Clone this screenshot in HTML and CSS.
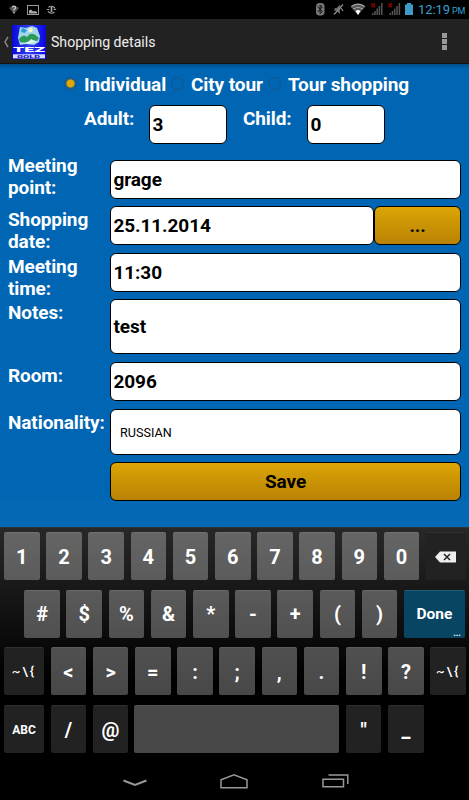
FILE: index.html
```html
<!DOCTYPE html>
<html lang="en">

<head>
    <meta charset="UTF-8">
    <meta name="viewport" content="width=device-width, initial-scale=1.0">
    <title>Shopping details</title>
    <link rel="stylesheet" href="styles.css">
</head>

<body>
    <div class="status-bar">
        <svg class="status-left" width="70" height="19" viewBox="0 0 70 19">
            <path d="M9 8q5-4 10 0l-5 6z" fill="#555" />
            <path d="M12.200 7.200q2-2 3.300 0q.4 1.300-1.500 2.300v1M14 12v1.300" fill="none" stroke="#ccc" stroke-width="1.300" />
            <rect x="27.500" y="5.500" width="11" height="9" fill="none" stroke="#999" />
            <path d="M29 13.500v-3l2-1 2 2 2-.5 2 1v1.500z" fill="#aaa" />
            <path d="M48.500 7.500a4 4 0 0 1 6.500 1M54.500 12a4 4 0 0 1-6.500-1M46.800 9.500h2.500M53.700 9.500h2.500" fill="none" stroke="#999" stroke-width="1.200" />
            <path d="M51.500 7v5" stroke="#aaa" stroke-width="1.600" />
        </svg>
        <svg class="status-right" width="104" height="19" viewBox="312 0 104 19">
            <rect x="316" y="3" width="8.500" height="12.500" rx="3.500" fill="#777" />
            <path d="M317.800 6.500l4.500 5-2.200 2v-8.500l2.200 2-4.500 5" fill="none" stroke="#111" />
            <path d="M334.500 8h2l3.500-3.500v9.500l-3.500-3h-2z" fill="#666" />
            <path d="M334 14.500l9-10M341 8l2 3" stroke="#888" stroke-width="1.300" />
            <path d="M350.500 6.500q7.500-6.500 15 0l-7.500 8.500z" fill="#555" />
            <path d="M351.500 6.500q6.500-4.500 13 0M353.500 9q4.500-3 9 0" fill="none" stroke="#aaa" stroke-width="1.200" />
            <path d="M355.500 11q2.500-2 5 0l-2.500 4z" fill="#fff" />
            <path d="M372.800 15v-2M375 15v-4M377.200 15v-6.500M379.400 15v-9M381.800 15v-12M390.300 15v-2M392.500 15v-4M394.700 15v-6.500M397 15v-9M399.400 15v-12" stroke="#555" stroke-width="1.500" />
            <path d="M371.500 3.500l3.500 3.500m0-3.500l-3.500 3.500M388.500 3.500l3.500 3.500m0-3.500l-3.500 3.500" stroke="#b00000" stroke-width="1.100" />
            <path d="M405 4.500h2v-1.500h4v1.500h2v10.500h-8z" fill="#3d9bc8" />
        </svg>
        <span class="clock">12:19<small>PM</small></span>
    </div>

    <div class="action-bar">
        <svg class="back" width="6" height="12" viewBox="0 0 6 12">
            <path d="M5 .8L2 6l3 5.200" fill="none" stroke="#888" stroke-width="1.500" />
        </svg>
        <svg class="logo" width="34" height="34" viewBox="0 0 34 34">
            <defs>
                <linearGradient id="logo-bg" x1="0" y1="0" x2="1" y2="0">
                    <stop offset="0" stop-color="#0a08d8" />
                    <stop offset=".5" stop-color="#3040f0" />
                    <stop offset="1" stop-color="#0805e0" />
                </linearGradient>
            </defs>
            <rect width="34" height="34" fill="url(#logo-bg)" />
            <path d="M8 2l6 1 6-2 5 2 3 8-1 6-5 3-8-1-6 1-2-7z" fill="#a3d7e8" />
            <path d="M10 3l5 2-2 3-4-1z" fill="#249bda" />
            <circle cx="18.500" cy="5" r="2.200" fill="#f4f6d0" />
            <path d="M7 14q4-6 8-2 4-7 12 1l-2 3-6-1-5 3-6-1z" fill="#2d9a5c" />
            <path d="M9 18q8 0 10-4l6 3-8 2z" fill="#d8f4ee" />
            <text class="logo-name" x="1" y="27.300" textLength="32" lengthAdjust="spacingAndGlyphs">TEZ</text>
            <rect x="1" y="29.300" width="32" height="4" fill="#dcdcff" />
            <text class="logo-sub" x="5" y="33" textLength="23" lengthAdjust="spacingAndGlyphs">GOLD</text>
        </svg>
        <h1>Shopping details</h1>
        <div class="menu-dots"><i></i><i></i><i></i></div>
    </div>

    <form class="details">
        <div class="types">
            <span class="radio checked"></span><label class="type-individual">Individual</label>
            <span class="radio"></span><label class="type-city">City tour</label>
            <span class="radio"></span><label>Tour shopping</label>
        </div>
        <div class="people">
            <label class="adult">Adult:</label>
            <div class="field small">3</div>
            <label class="child">Child:</label>
            <div class="field small">0</div>
        </div>

        <div class="row meeting-point">
            <label>Meeting point:</label>
            <div class="field">grage</div>
        </div>
        <div class="row">
            <label>Shopping date:</label>
            <div class="field date">25.11.2014</div>
            <div class="btn pick">...</div>
        </div>
        <div class="row">
            <label>Meeting time:</label>
            <div class="field">11:30</div>
        </div>
        <div class="row notes">
            <label>Notes:</label>
            <div class="field">test</div>
        </div>
        <div class="row">
            <label>Room:</label>
            <div class="field">2096</div>
        </div>
        <div class="row nationality">
            <label>Nationality:</label>
            <div class="field select">RUSSIAN</div>
        </div>
        <div class="row">
            <label></label>
            <div class="btn">Save</div>
        </div>
    </form>

    <div class="keyboard">
        <div class="keys">
            <b>1</b><b>2</b><b>3</b><b>4</b><b>5</b><b>6</b><b>7</b><b>8</b><b>9</b><b>0</b>
            <b class="dark wide">
                <svg width="21" height="12" viewBox="0 0 21 12">
                    <path d="M0 6l5-5.500h16v11h-16z" fill="#eee" />
                    <path d="M9 3l6 6m0-6l-6 6" stroke="#222" stroke-width="1.500" />
                </svg>
            </b>
        </div>
        <div class="keys second">
            <b>#</b><b>$</b><b>%</b><b>&amp;</b><b>*</b><b>-</b><b>+</b><b>(</b><b>)</b>
            <b class="done">Done<span>...</span></b>
        </div>
        <div class="keys third">
            <b class="dark alt">~\{</b><b>&lt;</b><b>&gt;</b><b>=</b><b>:</b><b>;</b><b>,</b><b>.</b><b>!</b><b>?</b><b class="dark alt last">~\{</b>
        </div>
        <div class="keys fourth">
            <b class="dark abc">ABC</b><b class="dark">/</b><b class="dark">@</b><b class="space"></b><b class="dark">"</b><b class="dark">_</b>
        </div>
    </div>

    <div class="nav-bar">
        <svg width="24" height="8" viewBox="0 0 24 8">
            <path d="M.5 1.500l11.500 4.500 11.500-4.500" fill="none" stroke="#999" stroke-width="2" />
        </svg>
        <svg class="home" width="28" height="16" viewBox="0 0 28 16">
            <path d="M1 14.700v-8l13-5 13 5v8z" fill="none" stroke="#999" stroke-width="1.500" />
        </svg>
        <svg class="recent" width="28" height="14" viewBox="0 0 28 14">
            <path d="M1 5.200h20.500v7.500h-20.500zM6.500 1h19.300v9" fill="none" stroke="#999" stroke-width="1.500" />
        </svg>
    </div>
</body>

</html>
```
FILE: styles.css
```css
/* General Styles */
* {
    box-sizing: border-box;
}

body {
    margin: 0;
    width: 469px;
    height: 800px;
    overflow: hidden;
    background-color: #000;
    font-family: Roboto, sans-serif;
}

svg {
    display: block;
    flex: none;
}

/* Status bar */
.status-bar {
    display: flex;
    height: 19px;
    color: #35a2cf;
}

.status-right {
    margin-left: 242px;
}

.clock {
    margin-left: 2px;
    font-size: 13px;
    line-height: 20px;
    letter-spacing: -0.1px;
    white-space: nowrap;
}

.clock small {
    margin-left: 2px;
    font-size: 9px;
}

/* Action bar */
.action-bar {
    display: flex;
    align-items: center;
    height: 45px;
    padding: 2px 22px 0 3px;
    background-color: #222;
    border-bottom: 1px solid #15120c;
}

.logo {
    margin-left: 3px;
}

.logo-name {
    font: 900 8px Roboto, sans-serif;
    fill: #fff;
}

.logo-sub {
    font: 900 3.8px Roboto, sans-serif;
    fill: #1515c8;
}

h1 {
    margin: 0 auto 0 5px;
    font-size: 14.1px;
    font-weight: 400;
    color: #eee;
}

.menu-dots {
    display: grid;
    gap: 1px;
    margin-bottom: 2px;
}

.menu-dots i {
    width: 5px;
    height: 5px;
    background-color: #999;
}

/* Form */
.details {
    height: 463px;
    padding: 0 8px;
    background: linear-gradient(#004f8c, #0065b3 5px, #0065b3 436px, #0468b5 437px);
    color: #fff;
    font-size: 19px;
    font-weight: 700;
    letter-spacing: -0.1px;
    line-height: 22px;
}

.types {
    display: flex;
    align-items: center;
    height: 41px;
    padding: 1px 0 0 56px;
    white-space: nowrap;
}

.types label {
    margin-left: 7px;
}

.radio {
    flex: none;
    width: 13px;
    height: 13px;
    margin-bottom: 3px;
    border: 1px solid #14558a;
    border-radius: 50%;
}

.checked {
    background: radial-gradient(#e0a800 0 3.5px, #2c6288 4.5px);
}

.type-individual {
    width: 87px;
}

.type-city {
    width: 77px;
}

.people {
    display: flex;
    height: 49px;
    padding-left: 76px;
}

.people label {
    padding-top: 3px;
}

.adult {
    width: 65px;
}

.child {
    width: 64px;
    margin-left: 16px;
}

.field,
.btn {
    display: flex;
    align-items: center;
    flex: 1;
    height: 39px;
    border: 1.5px solid #000;
    border-radius: 6px;
    background-color: #fff;
    color: #000;
}

.field {
    padding-left: 2.5px;
}

.small {
    flex: none;
    width: 78px;
}

.row {
    display: flex;
    height: 47px;
}

.row label {
    width: 102px;
    padding-top: 3px;
}

.row .field {
    padding-top: 1px;
}

.meeting-point {
    height: 52px;
    padding-top: 6px;
}

.meeting-point label {
    margin-top: -8px;
}

.date {
    flex: none;
    width: 264px;
}

.btn {
    justify-content: center;
    background: linear-gradient(#dba506, #b98203);
}

.notes {
    height: 63px;
    margin-top: -1px;
}

.notes .field {
    height: 55px;
}

.nationality {
    height: 53px;
}

.nationality .field {
    height: 46px;
}

.select {
    padding-left: 9px;
    font-size: 12.6px;
    font-weight: 400;
    letter-spacing: 0;
}

/* Keyboard */
.keyboard {
    display: grid;
    align-content: start;
    gap: 9.7px;
    height: 235px;
    padding: 4px 3px 0 4px;
    border-top: 1px solid #333;
    background: linear-gradient(#282828, #000 65%);
}

.keys {
    display: flex;
    gap: 6.6px;
    height: 48px;
}

.keys b {
    display: flex;
    flex: none;
    align-items: center;
    justify-content: center;
    width: 35.6px;
    border-top: 1px solid #707070;
    border-radius: 2px;
    background: linear-gradient(#656565, #5b5b5b);
    color: #fff;
    font-size: 20px;
}

.keys.second {
    padding-left: 20.3px;
}

.second b {
    background: linear-gradient(#5a5a5a, #505050);
    border-color: #686868;
}

.third b {
    background: linear-gradient(#505050, #484848);
    border-color: #5c5c5c;
}

.keys .dark {
    background: #222;
    border-color: #303030;
}

.keys .wide,
.keys .abc,
.keys .alt {
    width: 40px;
}

.keys .alt {
    font-size: 13px;
    font-weight: 500;
    letter-spacing: 2px;
}

.keys .last {
    width: 36px;
}

.keys .abc {
    font-size: 12px;
}

.keys .done {
    position: relative;
    width: 61px;
    background: #084563;
    border-color: #245b77;
    font-size: 15.5px;
}

.done span {
    position: absolute;
    right: 4px;
    bottom: 0;
    font-size: 9px;
    line-height: 9px;
}

.keys .space {
    width: 205px;
    margin-left: -0.7px;
    background: #484848;
    border-color: #535353;
}

/* Navigation bar */
.nav-bar {
    display: flex;
    align-items: center;
    height: 38px;
    padding: 4px 0 0 123px;
}

.home {
    margin: -4px 74px 0 73px;
}

.recent {
    margin-top: -4px;
}
```
